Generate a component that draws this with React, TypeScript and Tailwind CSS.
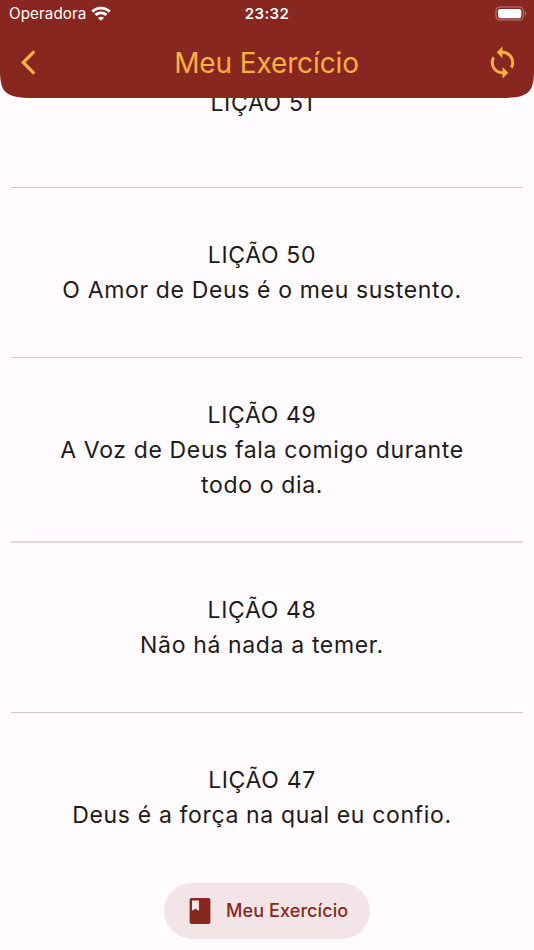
const lessons = [
  { title: 'LIÇÃO 51', lines: [], box: 'h-[171px] pt-[2px] border-b border-[#d8c5c4]' },
  { title: 'LIÇÃO 50', lines: ['O Amor de Deus é o meu sustento.'], box: 'h-[170px] pt-px border-b border-[#d8c5c4]' },
  { title: 'LIÇÃO 49', lines: ['A Voz de Deus fala comigo durante', 'todo o dia.'], box: 'h-[185px] pt-[2px] border-b-2 border-[#e5d5d4]' },
  { title: 'LIÇÃO 48', lines: ['Não há nada a temer.'], box: 'h-[170px] pt-px border-b border-[#d8c5c0]' },
  { title: 'LIÇÃO 47', lines: ['Deus é a força na qual eu confio.'], box: 'h-[170px]' },
];

function StatusBar() {
  return (
    <div className="flex h-7 items-center justify-between pl-[9px] pr-[7px] text-white">
      <div className="flex w-40 items-center gap-[5px]">
        <span className="text-[15.2px] leading-none tracking-[0.08px]">Operadora</span>
        <svg className="-mt-px h-[15px] w-5" viewBox="0 0 20 15" fill="none" stroke="currentColor" strokeWidth="2.9">
          <path d="M1.3 5.6C6 1 14 1 18.7 5.6" />
          <path d="M4.5 8.9c3.1-2.7 7.9-2.7 11 0" />
          <path d="M6.9 11.7C8.7 10.3 11.3 10.3 13.1 11.7L10 14.8Z" fill="currentColor" stroke="none" />
        </svg>
      </div>
      <span className="-ml-[2px] -mt-px text-[15px] font-semibold leading-none tracking-[0.4px]">23:32</span>
      <div className="flex w-40 justify-end">
        <svg className="-mt-[2px] h-[15px] w-8" viewBox="0 0 32 15" fill="none">
          <rect x="1" y="1" width="27.3" height="13" rx="4" stroke="#bd807d" strokeWidth="1.1" />
          <rect x="3" y="3" width="23.3" height="9.2" rx="2.2" fill="white" />
          <path d="M30 5.2c1.7.7 1.7 3.7 0 4.4Z" fill="#bd807d" />
        </svg>
      </div>
    </div>
  );
}

function Header() {
  return (
    <header className="h-[98px] shrink-0 bg-[#882620] [clip-path:path('M0_0H534V72C533.5_92_529_98_501_98H33C5_98_.5_92_0_72Z')]">
      <StatusBar />
      <div className="flex h-[69px] items-center justify-between pl-[18px] pr-[14px] text-[#f8b044]">
        <svg className="h-7 w-7" viewBox="0 0 28 28" fill="none" stroke="currentColor" strokeWidth="3.2">
          <path d="M16.3 2.3 5.2 13.5l11.1 11.2" />
        </svg>
        <h1 className="ml-[2px] text-[28px] font-normal leading-none tracking-[-0.12px]">Meu Exercício</h1>
        <svg className="h-[35px] w-[35px]" viewBox="0 0 24 24" fill="currentColor">
          <path d="M12 4V1L8 5l4 4V6c3.31 0 6 2.69 6 6 0 1.01-.25 1.97-.7 2.8l1.46 1.46C19.54 15.03 20 13.57 20 12c0-4.42-3.58-8-8-8zm0 14c-3.31 0-6-2.69-6-6 0-1.01.25-1.97.7-2.8L5.24 7.74C4.46 8.97 4 10.43 4 12c0 4.42 3.58 8 8 8v3l4-4-4-4v3z" />
        </svg>
      </div>
    </header>
  );
}

export default function App() {
  return (
    <div className="flex h-[950px] w-[534px] flex-col overflow-hidden bg-[#fffbff] font-['Inter',sans-serif] text-[#201a19]">
      <Header />
      <main className="min-h-0 flex-1 overflow-hidden">
        <div className="-mt-[81px] px-[11px]">
          {lessons.map((lesson) => (
            <section
              key={lesson.title}
              className={`${lesson.box} flex flex-col items-center justify-center pr-[10px] text-center text-[23px] leading-[35px] tracking-[0.64px]`}
            >
              <h2>{lesson.title}</h2>
              {lesson.lines.map((line) => (
                <p key={line} className="whitespace-nowrap">{line}</p>
              ))}
            </section>
          ))}
        </div>
      </main>
      <footer className="flex h-[67px] shrink-0 items-start justify-center">
        <button className="flex h-14 w-[206px] items-center rounded-full bg-[#f3e5e7] pl-[22px] text-[#882620]">
          <svg className="h-7 w-7" viewBox="0 0 28 28" fill="currentColor" fillRule="evenodd">
            <path d="M5.6 1.1h16.8a2 2 0 0 1 2 2v21.8a2 2 0 0 1-2 2H5.6a2 2 0 0 1-2-2V3.1a2 2 0 0 1 2-2ZM6 3.5v10.2l3.5-2 3.5 2V3.5Z" />
          </svg>
          <span className="ml-3 -mt-px whitespace-nowrap text-[18px] font-[550] tracking-[0.1px]">Meu Exercício</span>
        </button>
      </footer>
    </div>
  );
}
